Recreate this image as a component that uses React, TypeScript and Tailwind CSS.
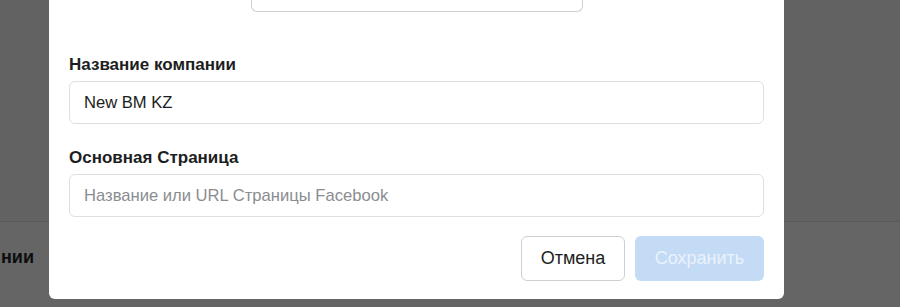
import React from 'react'

const font = { fontFamily: '"Liberation Sans", Arial, sans-serif' }

function Field({ label, value, placeholder }: { label: string; value?: string; placeholder?: string }) {
    return (
        <div className="flex flex-col gap-[6px]">
            <label className="text-[17px] leading-5 font-bold text-[#1c1e21]">{label}</label>
            <input
                readOnly
                value={value ?? ''}
                placeholder={placeholder}
                className="h-[43px] w-full rounded-md border border-[#dddfe2] bg-white px-[14px] text-[16.6px] text-[#1c1e21] placeholder:text-[#8a8d91] outline-none"
            />
        </div>
    )
}

export default function App() {
    return (
        <div className="relative h-[307px] w-[900px] overflow-hidden bg-[#656565]" style={font}>
            {/* page behind the overlay */}
            <div className="flex h-full flex-col">
                <div className="h-[222px] bg-[#626262] border-b border-[#5a5a5a]" />
                <div className="pt-[22px] pl-[1px]">
                    <span className="text-[18px] font-bold text-[#0c0c0d]">нии</span>
                </div>
            </div>

            {/* modal */}
            <div className="absolute left-[49px] top-0 w-[735px] rounded-b-md bg-white px-5 pb-[18px]">
                <div className="mx-auto h-[12px] w-[332px] rounded-b-md border-x border-b border-[#ccd0d5]" />

                <div className="mt-[43px] flex flex-col gap-[24px]">
                    <Field label="Название компании" value="New BM KZ" />
                    <Field label="Основная Страница" placeholder="Название или URL Страницы Facebook" />
                </div>

                <div className="mt-[19px] flex justify-end gap-[10px]">
                    <button className="h-[45px] w-[104px] rounded-md border border-[#ccd0d5] bg-white text-[18px] text-[#1c1e21]">
                        Отмена
                    </button>
                    <button className="h-[45px] w-[129px] rounded-md bg-[#c4dbf5] text-[18px] text-[#eaf2fc]">
                        Сохранить
                    </button>
                </div>
            </div>
        </div>
    )
}
